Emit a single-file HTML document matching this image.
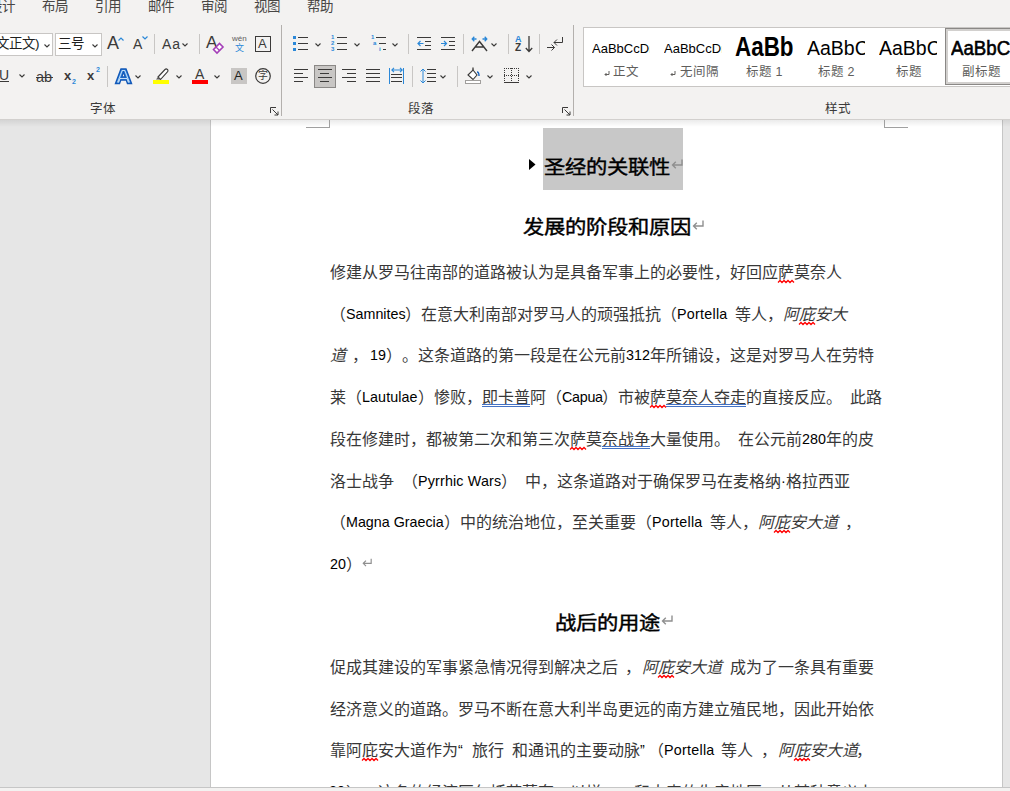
<!DOCTYPE html>
<html lang="zh-CN"><head><meta charset="utf-8"><style>
*{margin:0;padding:0;box-sizing:border-box}
html,body{width:1010px;height:791px;overflow:hidden}
body{position:relative;background:#e6e6e6;font-family:"Liberation Sans",sans-serif;color:#000;text-spacing-trim:space-all}
.a{position:absolute}
.t{position:absolute;white-space:pre;line-height:20px;font-size:16px;color:#383838}
.l{position:absolute;white-space:pre;line-height:20px;font-size:14.3px;color:#000}
.i{position:absolute;white-space:pre;line-height:20px;font-size:16px;font-style:italic;color:#383838}
.h{position:absolute;white-space:pre;line-height:30px;font-size:21.33px;-webkit-text-stroke:0.45px #000;color:#000;transform:scaleY(0.9);transform-origin:0 15px}
.rb{position:absolute;white-space:pre;color:#3b3a39}
svg{position:absolute;overflow:visible}
</style></head><body>

<div class="a" style="left:0;top:0;width:1010px;height:120px;background:#f3f2f1"></div>

<span class="rb" style="left:-11px;top:-2px;font-size:13.5px;line-height:18px;color:#484644">设计</span>
<span class="rb" style="left:42px;top:-2px;font-size:13.5px;line-height:18px;color:#484644">布局</span>
<span class="rb" style="left:95px;top:-2px;font-size:13.5px;line-height:18px;color:#484644">引用</span>
<span class="rb" style="left:148px;top:-2px;font-size:13.5px;line-height:18px;color:#484644">邮件</span>
<span class="rb" style="left:201px;top:-2px;font-size:13.5px;line-height:18px;color:#484644">审阅</span>
<span class="rb" style="left:254px;top:-2px;font-size:13.5px;line-height:18px;color:#484644">视图</span>
<span class="rb" style="left:307px;top:-2px;font-size:13.5px;line-height:18px;color:#484644">帮助</span>
<span class="rb" style="left:90px;top:101px;font-size:12.5px;line-height:16px;color:#3b3a39">字体</span>
<span class="rb" style="left:408px;top:101px;font-size:12.5px;line-height:16px;color:#3b3a39">段落</span>
<span class="rb" style="left:825px;top:101px;font-size:12.5px;line-height:16px;color:#3b3a39">样式</span>
<div class="a" style="left:281px;top:25px;width:1px;height:91px;background:#b3b0ad"></div>
<div class="a" style="left:573px;top:25px;width:1px;height:91px;background:#b3b0ad"></div>
<div class="a" style="left:154px;top:34px;width:1px;height:20px;background:#c8c6c4"></div>
<div class="a" style="left:199px;top:34px;width:1px;height:20px;background:#c8c6c4"></div>
<div class="a" style="left:408px;top:34px;width:1px;height:20px;background:#c8c6c4"></div>
<div class="a" style="left:463px;top:34px;width:1px;height:20px;background:#c8c6c4"></div>
<div class="a" style="left:508px;top:34px;width:1px;height:20px;background:#c8c6c4"></div>
<div class="a" style="left:539px;top:34px;width:1px;height:20px;background:#c8c6c4"></div>
<div class="a" style="left:107px;top:66px;width:1px;height:21px;background:#c8c6c4"></div>
<div class="a" style="left:412px;top:66px;width:1px;height:21px;background:#c8c6c4"></div>
<div class="a" style="left:457px;top:66px;width:1px;height:21px;background:#c8c6c4"></div>
<svg style="left:270px;top:107px" width="9" height="9" viewBox="0 0 9 9"><path d="M0.5 6V0.5H6" fill="none" stroke="#3b3a39" stroke-width="1"/><path d="M2.5 2.5L8 8M8 4.5V8H4.5" fill="none" stroke="#3b3a39" stroke-width="1"/></svg>
<svg style="left:562px;top:107px" width="9" height="9" viewBox="0 0 9 9"><path d="M0.5 6V0.5H6" fill="none" stroke="#3b3a39" stroke-width="1"/><path d="M2.5 2.5L8 8M8 4.5V8H4.5" fill="none" stroke="#3b3a39" stroke-width="1"/></svg>
<div class="a" style="left:-2px;top:33px;width:55px;height:23px;background:#fff;border:1px solid #c8c6c4"></div>
<span class="rb" style="left:-4px;top:36px;font-size:13.5px;line-height:16px;color:#201f1e">文正文)</span>
<svg style="left:44px;top:44px" width="6" height="4" viewBox="0 0 6 4"><path d="M0.5 0.5L3 3L5.5 0.5" fill="none" stroke="#3b3a39" stroke-width="1.1"/></svg>
<div class="a" style="left:55px;top:33px;width:47px;height:23px;background:#fff;border:1px solid #c8c6c4"></div>
<span class="rb" style="left:58px;top:36px;font-size:13.5px;line-height:16px;color:#201f1e">三号</span>
<svg style="left:92px;top:44px" width="6" height="4" viewBox="0 0 6 4"><path d="M0.5 0.5L3 3L5.5 0.5" fill="none" stroke="#3b3a39" stroke-width="1.1"/></svg>
<span class="rb" style="left:107px;top:33px;font-size:18px;line-height:20px;color:#3b3a39">A</span>
<svg style="left:118px;top:37px" width="6" height="4"><path d="M0.5 3.5L3 1L5.5 3.5" fill="none" stroke="#2b88d8" stroke-width="1.2"/></svg>
<span class="rb" style="left:133px;top:36px;font-size:14px;line-height:16px;color:#3b3a39">A</span>
<svg style="left:142px;top:36px" width="6" height="4"><path d="M0.5 0.5L3 3L5.5 0.5" fill="none" stroke="#2b88d8" stroke-width="1.2"/></svg>
<span class="rb" style="left:162px;top:36px;font-size:14px;line-height:16px;color:#3b3a39;letter-spacing:1px">Aa</span>
<svg style="left:182px;top:43px" width="6" height="4" viewBox="0 0 6 4"><path d="M0.5 0.5L3 3L5.5 0.5" fill="none" stroke="#3b3a39" stroke-width="1.1"/></svg>
<span class="rb" style="left:206px;top:33px;font-size:17px;line-height:20px;color:#3b3a39">A</span>
<svg style="left:212px;top:41px" width="13" height="13"><path d="M1.5 8.5L7.5 2.5L11 6L5 12Z" fill="#fff" stroke="#a43fb8" stroke-width="1.6"/><path d="M4 6L7.5 9.5" stroke="#a43fb8" stroke-width="1.2"/></svg>
<span class="rb" style="left:232px;top:34px;font-size:8px;line-height:10px;color:#605e5c">wén</span>
<span class="rb" style="left:235px;top:43px;font-size:9px;line-height:10px;color:#2b88d8">文</span>
<div class="a" style="left:255px;top:36px;width:16px;height:16px;border:1.3px solid #3b3a39"></div>
<span class="rb" style="left:258px;top:37px;font-size:13px;line-height:14px;color:#3b3a39">A</span>
<span class="rb" style="left:-1px;top:68px;font-size:14px;line-height:14px;color:#3b3a39">U</span>
<div class="a" style="left:0;top:81px;width:9px;height:1px;background:#3b3a39"></div>
<svg style="left:19px;top:74px" width="6" height="4" viewBox="0 0 6 4"><path d="M0.5 0.5L3 3L5.5 0.5" fill="none" stroke="#3b3a39" stroke-width="1.1"/></svg>
<span class="rb" style="left:36px;top:70px;font-size:14.5px;line-height:14px;color:#3b3a39">ab</span>
<div class="a" style="left:36px;top:77px;width:17px;height:1px;background:#3b3a39"></div>
<span class="rb" style="left:64px;top:69px;font-size:13px;line-height:14px;font-weight:bold;color:#3b3a39">x</span>
<span class="rb" style="left:72px;top:78px;font-size:7px;line-height:8px;font-weight:bold;color:#2b88d8">2</span>
<span class="rb" style="left:87px;top:69px;font-size:13px;line-height:14px;font-weight:bold;color:#3b3a39">x</span>
<span class="rb" style="left:96px;top:66px;font-size:7px;line-height:8px;font-weight:bold;color:#2b88d8">2</span>
<svg style="left:115px;top:68px" width="17" height="16" viewBox="0 0 17 16"><path d="M6 1H11L16.5 15.5H12.5L11.3 12H5.7L4.5 15.5H0.5Z M6.7 9H10.3L8.5 3.8Z" fill="#3a8ee0" stroke="#1258b8" stroke-width="1.4" fill-rule="evenodd"/><path d="M7.2 2.5H9.8L14.3 14.2H13.3L12 10.5H5L3.7 14.2H2.7Z" fill="none" stroke="#fff" stroke-width="0.7"/></svg>
<svg style="left:135px;top:75px" width="6" height="4" viewBox="0 0 6 4"><path d="M0.5 0.5L3 3L5.5 0.5" fill="none" stroke="#3b3a39" stroke-width="1.1"/></svg>
<svg style="left:153px;top:67px" width="17" height="18" viewBox="0 0 17 18"><path d="M5 10L12 2.5Q13.2 1.3 14.4 2.5Q15.6 3.7 14.4 4.9L7.5 12.5Z" fill="#fff" stroke="#3b3a39" stroke-width="1.1"/><path d="M5 10L3 12.5L5.5 12.6L7.5 12.5Z" fill="#605e5c"/><rect x="0" y="13" width="16" height="4" fill="#ffff00"/></svg>
<svg style="left:176px;top:75px" width="6" height="4" viewBox="0 0 6 4"><path d="M0.5 0.5L3 3L5.5 0.5" fill="none" stroke="#3b3a39" stroke-width="1.1"/></svg>
<span class="rb" style="left:195px;top:66px;font-size:14px;line-height:16px;color:#3b3a39">A</span>
<div class="a" style="left:192px;top:80px;width:16px;height:4px;background:#ff0000"></div>
<svg style="left:214px;top:75px" width="6" height="4" viewBox="0 0 6 4"><path d="M0.5 0.5L3 3L5.5 0.5" fill="none" stroke="#3b3a39" stroke-width="1.1"/></svg>
<div class="a" style="left:231px;top:68px;width:16px;height:16px;background:#c8c6c4"></div>
<span class="rb" style="left:234px;top:69px;font-size:13px;line-height:14px;color:#201f1e">A</span>
<svg style="left:255px;top:68px" width="17" height="17"><circle cx="8" cy="8" r="7.3" fill="none" stroke="#3b3a39" stroke-width="1.2"/></svg>
<span class="rb" style="left:258px;top:69px;font-size:10px;line-height:14px;color:#3b3a39">字</span>
<div class="a" style="left:293px;top:36px;width:3px;height:3px;background:#2b88d8"></div>
<div class="a" style="left:298px;top:37px;width:10px;height:1px;background:#3b3a39"></div>
<div class="a" style="left:293px;top:42px;width:3px;height:3px;background:#2b88d8"></div>
<div class="a" style="left:298px;top:43px;width:10px;height:1px;background:#3b3a39"></div>
<div class="a" style="left:293px;top:48px;width:3px;height:3px;background:#2b88d8"></div>
<div class="a" style="left:298px;top:49px;width:10px;height:1px;background:#3b3a39"></div>
<svg style="left:315px;top:43px" width="6" height="4" viewBox="0 0 6 4"><path d="M0.5 0.5L3 3L5.5 0.5" fill="none" stroke="#3b3a39" stroke-width="1.1"/></svg>
<span class="rb" style="left:331px;top:33px;font-size:6px;line-height:8px;font-weight:bold;color:#2b88d8">1</span>
<div class="a" style="left:337px;top:37px;width:10px;height:1px;background:#3b3a39"></div>
<span class="rb" style="left:331px;top:39px;font-size:6px;line-height:8px;font-weight:bold;color:#2b88d8">2</span>
<div class="a" style="left:337px;top:43px;width:10px;height:1px;background:#3b3a39"></div>
<span class="rb" style="left:331px;top:45px;font-size:6px;line-height:8px;font-weight:bold;color:#2b88d8">3</span>
<div class="a" style="left:337px;top:49px;width:10px;height:1px;background:#3b3a39"></div>
<svg style="left:354px;top:43px" width="6" height="4" viewBox="0 0 6 4"><path d="M0.5 0.5L3 3L5.5 0.5" fill="none" stroke="#3b3a39" stroke-width="1.1"/></svg>
<span class="rb" style="left:371px;top:33px;font-size:6px;line-height:8px;font-weight:bold;color:#2b88d8">1</span>
<span class="rb" style="left:373px;top:39px;font-size:6px;line-height:8px;font-weight:bold;color:#2b88d8">a</span>
<span class="rb" style="left:379px;top:45px;font-size:6px;line-height:8px;font-weight:bold;color:#2b88d8">i</span>
<div class="a" style="left:376px;top:37px;width:10px;height:1px;background:#3b3a39"></div>
<div class="a" style="left:379px;top:43px;width:7px;height:1px;background:#3b3a39"></div>
<div class="a" style="left:383px;top:49px;width:3px;height:1px;background:#3b3a39"></div>
<svg style="left:392px;top:43px" width="6" height="4" viewBox="0 0 6 4"><path d="M0.5 0.5L3 3L5.5 0.5" fill="none" stroke="#3b3a39" stroke-width="1.1"/></svg>
<div class="a" style="left:417px;top:37px;width:14px;height:1px;background:#3b3a39"></div>
<div class="a" style="left:425px;top:41px;width:6px;height:1px;background:#3b3a39"></div>
<div class="a" style="left:425px;top:45px;width:6px;height:1px;background:#3b3a39"></div>
<div class="a" style="left:417px;top:49px;width:14px;height:1px;background:#3b3a39"></div>
<svg style="left:417px;top:40px" width="7" height="7"><path d="M6.5 3.5H1M3.5 1L1 3.5L3.5 6" fill="none" stroke="#2b88d8" stroke-width="1.2"/></svg>
<div class="a" style="left:441px;top:37px;width:14px;height:1px;background:#3b3a39"></div>
<div class="a" style="left:449px;top:41px;width:6px;height:1px;background:#3b3a39"></div>
<div class="a" style="left:449px;top:45px;width:6px;height:1px;background:#3b3a39"></div>
<div class="a" style="left:441px;top:49px;width:14px;height:1px;background:#3b3a39"></div>
<svg style="left:441px;top:40px" width="7" height="7"><path d="M0 3.5H5.5M3 1L5.5 3.5L3 6" fill="none" stroke="#2b88d8" stroke-width="1.2"/></svg>
<svg style="left:471px;top:36px" width="17" height="16" viewBox="0 0 17 16"><path d="M1 15L8.5 5.5L16 15M4.3 11H12.7" fill="none" stroke="#3b3a39" stroke-width="1.4"/><path d="M1.5 3H5.5M3.3 0.8L1.2 3L3.3 5.2M15.5 3H11.5M13.7 0.8L15.8 3L13.7 5.2" fill="none" stroke="#2b88d8" stroke-width="1.3"/></svg>
<svg style="left:491px;top:43px" width="6" height="4" viewBox="0 0 6 4"><path d="M0.5 0.5L3 3L5.5 0.5" fill="none" stroke="#3b3a39" stroke-width="1.1"/></svg>
<span class="rb" style="left:515px;top:34px;font-size:9px;line-height:10px;font-weight:bold;color:#2b88d8">A</span>
<span class="rb" style="left:515px;top:43px;font-size:10px;line-height:10px;font-weight:bold;color:#3b3a39">Z</span>
<svg style="left:525px;top:36px" width="8" height="17"><path d="M4 0V15.5M0.8 12L4 15.5L7.2 12" fill="none" stroke="#3b3a39" stroke-width="1.3"/></svg>
<svg style="left:547px;top:36px" width="17" height="16" viewBox="0 0 17 16"><path d="M15.5 1V6.5H7M10 3.5L7 6.5L10 9.5" fill="none" stroke="#3b3a39" stroke-width="1"/><path d="M0 11.5H7.5M4.5 8.5L7.5 11.5L4.5 14.5" fill="none" stroke="#3b3a39" stroke-width="1"/></svg>
<div class="a" style="left:314px;top:65px;width:22px;height:23px;background:#c8c6c4;border:1px solid #8a8886"></div>
<div class="a" style="left:294px;top:69px;width:14px;height:1.2px;background:#3b3a39"></div>
<div class="a" style="left:294px;top:73px;width:9px;height:1.2px;background:#3b3a39"></div>
<div class="a" style="left:294px;top:77px;width:14px;height:1.2px;background:#3b3a39"></div>
<div class="a" style="left:294px;top:81px;width:9px;height:1.2px;background:#3b3a39"></div>
<div class="a" style="left:318px;top:69px;width:14px;height:1.2px;background:#3b3a39"></div>
<div class="a" style="left:320px;top:73px;width:9px;height:1.2px;background:#3b3a39"></div>
<div class="a" style="left:318px;top:77px;width:14px;height:1.2px;background:#3b3a39"></div>
<div class="a" style="left:320px;top:81px;width:9px;height:1.2px;background:#3b3a39"></div>
<div class="a" style="left:342px;top:69px;width:14px;height:1.2px;background:#3b3a39"></div>
<div class="a" style="left:347px;top:73px;width:9px;height:1.2px;background:#3b3a39"></div>
<div class="a" style="left:342px;top:77px;width:14px;height:1.2px;background:#3b3a39"></div>
<div class="a" style="left:347px;top:81px;width:9px;height:1.2px;background:#3b3a39"></div>
<div class="a" style="left:366px;top:69px;width:14px;height:1.2px;background:#3b3a39"></div>
<div class="a" style="left:366px;top:73px;width:14px;height:1.2px;background:#3b3a39"></div>
<div class="a" style="left:366px;top:77px;width:14px;height:1.2px;background:#3b3a39"></div>
<div class="a" style="left:366px;top:81px;width:14px;height:1.2px;background:#3b3a39"></div>
<div class="a" style="left:389px;top:68px;width:1.2px;height:16px;background:#2b88d8"></div>
<div class="a" style="left:403px;top:68px;width:1.2px;height:16px;background:#2b88d8"></div>
<svg style="left:391px;top:67px" width="12" height="6"><path d="M0.5 3H11.5M3 0.8L0.8 3L3 5.2M9 0.8L11.2 3L9 5.2" fill="none" stroke="#2b88d8" stroke-width="1.1"/></svg>
<div class="a" style="left:391px;top:74px;width:11px;height:1.2px;background:#3b3a39"></div>
<div class="a" style="left:391px;top:77px;width:11px;height:1.2px;background:#3b3a39"></div>
<div class="a" style="left:391px;top:81px;width:11px;height:1.2px;background:#3b3a39"></div>
<svg style="left:419px;top:68px" width="8" height="17"><path d="M4 1V15M1.5 3.5L4 1L6.5 3.5M1.5 12.5L4 15L6.5 12.5" fill="none" stroke="#2b88d8" stroke-width="1"/></svg>
<div class="a" style="left:427px;top:69px;width:9px;height:1.2px;background:#3b3a39"></div>
<div class="a" style="left:427px;top:73px;width:9px;height:1.2px;background:#3b3a39"></div>
<div class="a" style="left:427px;top:77px;width:9px;height:1.2px;background:#3b3a39"></div>
<div class="a" style="left:427px;top:81px;width:9px;height:1.2px;background:#3b3a39"></div>
<svg style="left:440px;top:75px" width="6" height="4" viewBox="0 0 6 4"><path d="M0.5 0.5L3 3L5.5 0.5" fill="none" stroke="#3b3a39" stroke-width="1.1"/></svg>
<svg style="left:465px;top:67px" width="17" height="18" viewBox="0 0 17 18"><path d="M3 8L8 3L12 8L8 12.5Z" fill="#fff" stroke="#3b3a39" stroke-width="1.1"/><path d="M8 3V0.5" stroke="#3b3a39" stroke-width="1.3"/><path d="M12 5Q14 5 14 9" fill="none" stroke="#1664c0" stroke-width="1.4"/><rect x="0.5" y="13.5" width="15" height="3" fill="#fff" stroke="#a19f9d" stroke-width="1"/></svg>
<svg style="left:487px;top:75px" width="6" height="4" viewBox="0 0 6 4"><path d="M0.5 0.5L3 3L5.5 0.5" fill="none" stroke="#3b3a39" stroke-width="1.1"/></svg>
<svg style="left:504px;top:68px" width="16" height="16" viewBox="0 0 16 16" shape-rendering="crispEdges"><g fill="#3b3a39"><rect x="0" y="0" width="1" height="1"/><rect x="0" y="7" width="1" height="1"/><rect x="0" y="0" width="1" height="1"/><rect x="14" y="0" width="1" height="1"/><rect x="7" y="0" width="1" height="1"/><rect x="2" y="0" width="1" height="1"/><rect x="2" y="7" width="1" height="1"/><rect x="0" y="2" width="1" height="1"/><rect x="14" y="2" width="1" height="1"/><rect x="7" y="2" width="1" height="1"/><rect x="4" y="0" width="1" height="1"/><rect x="4" y="7" width="1" height="1"/><rect x="0" y="4" width="1" height="1"/><rect x="14" y="4" width="1" height="1"/><rect x="7" y="4" width="1" height="1"/><rect x="6" y="0" width="1" height="1"/><rect x="6" y="7" width="1" height="1"/><rect x="0" y="6" width="1" height="1"/><rect x="14" y="6" width="1" height="1"/><rect x="7" y="6" width="1" height="1"/><rect x="8" y="0" width="1" height="1"/><rect x="8" y="7" width="1" height="1"/><rect x="0" y="8" width="1" height="1"/><rect x="14" y="8" width="1" height="1"/><rect x="7" y="8" width="1" height="1"/><rect x="10" y="0" width="1" height="1"/><rect x="10" y="7" width="1" height="1"/><rect x="0" y="10" width="1" height="1"/><rect x="14" y="10" width="1" height="1"/><rect x="7" y="10" width="1" height="1"/><rect x="12" y="0" width="1" height="1"/><rect x="12" y="7" width="1" height="1"/><rect x="0" y="12" width="1" height="1"/><rect x="14" y="12" width="1" height="1"/><rect x="7" y="12" width="1" height="1"/><rect x="14" y="0" width="1" height="1"/><rect x="14" y="7" width="1" height="1"/><rect x="0" y="14" width="1" height="1"/><rect x="14" y="14" width="1" height="1"/><rect x="7" y="14" width="1" height="1"/></g><rect x="0" y="14" width="15" height="1" fill="#3b3a39"/></svg>
<svg style="left:526px;top:75px" width="6" height="4" viewBox="0 0 6 4"><path d="M0.5 0.5L3 3L5.5 0.5" fill="none" stroke="#3b3a39" stroke-width="1.1"/></svg>
<div class="a" style="left:583px;top:27px;width:440px;height:60px;background:#fff;border:1px solid #c8c6c4"></div>
<div class="a" style="left:945px;top:28px;width:80px;height:57px;border:1px solid #8a8886;box-shadow:inset 0 0 0 2px #d2d0ce"></div>
<div class="a" style="left:592px;top:40px;width:58px;height:19px;overflow:hidden"><span class="rb" style="left:0;top:0;font-size:13px;line-height:17px;color:#000;font-weight:normal;transform:scaleX(1.0);transform-origin:0 0;-webkit-text-stroke:0px #000">AaBbCcDı</span></div>
<div class="a" style="left:664px;top:40px;width:58px;height:19px;overflow:hidden"><span class="rb" style="left:0;top:0;font-size:13px;line-height:17px;color:#000;font-weight:normal;transform:scaleX(1.0);transform-origin:0 0;-webkit-text-stroke:0px #000">AaBbCcDı</span></div>
<div class="a" style="left:735px;top:31px;width:58px;height:34px;overflow:hidden"><span class="rb" style="left:0;top:0;font-size:28px;line-height:32px;color:#000;font-weight:bold;transform:scaleX(0.8);transform-origin:0 0;-webkit-text-stroke:0px #000">AaBbl</span></div>
<div class="a" style="left:807px;top:36px;width:58px;height:26.5px;overflow:hidden"><span class="rb" style="left:0;top:0;font-size:20.5px;line-height:24.5px;color:#000;font-weight:normal;transform:scaleX(0.95);transform-origin:0 0;-webkit-text-stroke:0px #000">AaBbC</span></div>
<div class="a" style="left:879px;top:36px;width:58px;height:26.5px;overflow:hidden"><span class="rb" style="left:0;top:0;font-size:20.5px;line-height:24.5px;color:#000;font-weight:normal;transform:scaleX(0.95);transform-origin:0 0;-webkit-text-stroke:0px #000">AaBbC</span></div>
<div class="a" style="left:951px;top:36px;width:70px;height:26.5px;overflow:hidden"><span class="rb" style="left:0;top:0;font-size:20.5px;line-height:24.5px;color:#000;font-weight:normal;transform:scaleX(0.91);transform-origin:0 0;-webkit-text-stroke:0.6px #000">AaBbC</span></div>
<span class="rb" style="left:613px;top:64px;font-size:12.5px;line-height:16px;color:#605e5c">正文</span>
<span class="rb" style="left:680px;top:64px;font-size:12.5px;line-height:16px;color:#605e5c">无间隔</span>
<span class="rb" style="left:746px;top:64px;font-size:12.5px;line-height:16px;color:#605e5c">标题 1</span>
<span class="rb" style="left:818px;top:64px;font-size:12.5px;line-height:16px;color:#605e5c">标题 2</span>
<span class="rb" style="left:896px;top:64px;font-size:12.5px;line-height:16px;color:#605e5c">标题</span>
<span class="rb" style="left:962px;top:64px;font-size:12.5px;line-height:16px;color:#605e5c">副标题</span>
<svg style="left:604px;top:71px" width="6" height="6"><path d="M5 0V3.5H1M2.5 2L1 3.5L2.5 5" fill="none" stroke="#605e5c" stroke-width="1"/></svg>
<svg style="left:670px;top:71px" width="6" height="6"><path d="M5 0V3.5H1M2.5 2L1 3.5L2.5 5" fill="none" stroke="#605e5c" stroke-width="1"/></svg>
<div class="a" style="left:211px;top:120px;width:791px;height:667px;background:#fff"></div>
<div class="a" style="left:210px;top:120px;width:1px;height:667px;background:#c6c6c6"></div>
<div class="a" style="left:1002px;top:120px;width:1px;height:667px;background:#c6c6c6"></div>
<div class="a" style="left:0;top:119px;width:1010px;height:1px;background:#d2d0ce"></div>
<div class="a" style="left:0;top:120px;width:1010px;height:7px;background:linear-gradient(#00000014,#00000000)"></div>
<div class="a" style="left:0;top:787px;width:1010px;height:1px;background:#c6c6c6"></div>
<div class="a" style="left:0;top:788px;width:1010px;height:3px;background:#f3f2f1"></div>
<div class="a" style="left:306px;top:127px;width:24px;height:1px;background:#a0a0a0"></div>
<div class="a" style="left:329px;top:120px;width:1px;height:8px;background:#a0a0a0"></div>
<div class="a" style="left:884px;top:127px;width:24px;height:1px;background:#a0a0a0"></div>
<div class="a" style="left:884px;top:120px;width:1px;height:8px;background:#a0a0a0"></div>
<div class="a" style="left:543px;top:128px;width:140px;height:62px;background:#c8c8c8"></div>
<svg style="left:529px;top:159px" width="7" height="12"><path d="M0 0L6.5 5.5L0 11Z" fill="#000"/></svg>
<span class="h" style="left:543.5px;top:152.6px">圣经的关联性</span>
<svg style="left:671px;top:159px" width="12" height="10" viewBox="0 0 12 10"><path d="M11 0.5V6H1.5M4.8 2.7L1.5 6L4.8 9.3" fill="none" stroke="#8f8f8f" stroke-width="1.4"/></svg>
<span class="h" style="left:523px;top:213px">发展的阶段和原因</span>
<svg style="left:692px;top:220px" width="12" height="10" viewBox="0 0 12 10"><path d="M11 0.5V6H1.5M4.8 2.7L1.5 6L4.8 9.3" fill="none" stroke="#8f8f8f" stroke-width="1.4"/></svg>
<span class="h" style="left:555px;top:609px">战后的用途</span>
<svg style="left:661px;top:615px" width="12" height="10" viewBox="0 0 12 10"><path d="M11 0.5V6H1.5M4.8 2.7L1.5 6L4.8 9.3" fill="none" stroke="#8f8f8f" stroke-width="1.4"/></svg>
<span class="t" style="left:330px;top:263.0px">修建从罗马往南部的道路被认为是具备军事上的必要性，好回应萨莫奈人</span>
<svg style="left:778px;top:280.0px" width="16" height="3"><path d="M0 2.5 L2 0.5 L4 2.5 L6 0.5 L8 2.5 L10 0.5 L12 2.5 L14 0.5 L16 2.5" fill="none" stroke="#ff0000" stroke-width="1.3"/></svg>
<span class="t" style="left:330px;top:304.7px">（</span>
<span class="l" style="left:346px;top:303.7px">Samnites</span>
<span class="t" style="left:405px;top:304.7px">）在意大利南部对罗马人的顽强抵抗（</span>
<span class="l" style="left:677px;top:303.7px;letter-spacing:0.26px">Portella</span>
<span class="t" style="left:735px;top:304.7px">等人，</span>
<span class="i" style="left:783px;top:304.7px">阿庇安大</span>
<svg style="left:799px;top:321.7px" width="16" height="3"><path d="M0 2.5 L2 0.5 L4 2.5 L6 0.5 L8 2.5 L10 0.5 L12 2.5 L14 0.5 L16 2.5" fill="none" stroke="#ff0000" stroke-width="1.3"/></svg>
<span class="i" style="left:330px;top:346.4px">道</span>
<span class="t" style="left:352px;top:346.4px">，</span>
<span class="l" style="left:370px;top:345.4px">19</span>
<span class="t" style="left:386px;top:346.4px">）。</span>
<span class="t" style="left:418px;top:346.4px">这条道路的第一段是在公元前</span>
<span class="l" style="left:626px;top:345.4px">312</span>
<span class="t" style="left:650px;top:346.4px">年所铺设，这是对罗马人在劳特</span>
<span class="t" style="left:330px;top:388.1px">莱（</span>
<span class="l" style="left:362px;top:387.1px;letter-spacing:0.1px">Lautulae</span>
<span class="t" style="left:418px;top:388.1px">）惨败，即卡普阿（</span>
<span class="l" style="left:562px;top:387.1px;letter-spacing:-0.28px">Capua</span>
<span class="t" style="left:602px;top:388.1px">）市被萨莫奈人夺走的直接反应。</span>
<span class="t" style="left:850px;top:388.1px">此路</span>
<div class="a" style="left:482px;top:404.1px;width:48px;height:1px;background:#4472c4"></div>
<div class="a" style="left:482px;top:406.1px;width:48px;height:1px;background:#4472c4"></div>
<svg style="left:650px;top:405.1px" width="16" height="3"><path d="M0 2.5 L2 0.5 L4 2.5 L6 0.5 L8 2.5 L10 0.5 L12 2.5 L14 0.5 L16 2.5" fill="none" stroke="#ff0000" stroke-width="1.3"/></svg>
<div class="a" style="left:666px;top:404.1px;width:80px;height:1px;background:#4472c4"></div>
<div class="a" style="left:666px;top:406.1px;width:80px;height:1px;background:#4472c4"></div>
<span class="t" style="left:330px;top:429.8px">段在修建时，都被第二次和第三次萨莫奈战争大量使用。</span>
<span class="t" style="left:738px;top:429.8px">在公元前</span>
<span class="l" style="left:802px;top:428.8px">280</span>
<span class="t" style="left:826px;top:429.8px">年的皮</span>
<svg style="left:570px;top:446.8px" width="16" height="3"><path d="M0 2.5 L2 0.5 L4 2.5 L6 0.5 L8 2.5 L10 0.5 L12 2.5 L14 0.5 L16 2.5" fill="none" stroke="#ff0000" stroke-width="1.3"/></svg>
<div class="a" style="left:602px;top:445.8px;width:48px;height:1px;background:#4472c4"></div>
<div class="a" style="left:602px;top:447.8px;width:48px;height:1px;background:#4472c4"></div>
<span class="t" style="left:330px;top:471.5px">洛士战争</span>
<span class="t" style="left:402px;top:471.5px">（</span>
<span class="l" style="left:418px;top:470.5px;letter-spacing:0.17px">Pyrrhic Wars</span>
<span class="t" style="left:501px;top:471.5px">）</span>
<span class="t" style="left:525px;top:471.5px">中，这条道路对于确保罗马在麦格纳</span>
<span class="l" style="left:781px;top:470.5px">·</span>
<span class="t" style="left:786px;top:471.5px">格拉西亚</span>
<span class="t" style="left:330px;top:513.2px">（</span>
<span class="l" style="left:346px;top:512.2px">Magna Graecia</span>
<span class="t" style="left:444px;top:513.2px">）中的统治地位，至关重要（</span>
<span class="l" style="left:652px;top:512.2px;letter-spacing:0.26px">Portella</span>
<span class="t" style="left:710px;top:513.2px">等人，</span>
<span class="i" style="left:758px;top:513.2px">阿庇安大道</span>
<span class="t" style="left:845px;top:513.2px">，</span>
<svg style="left:774px;top:530.2px" width="16" height="3"><path d="M0 2.5 L2 0.5 L4 2.5 L6 0.5 L8 2.5 L10 0.5 L12 2.5 L14 0.5 L16 2.5" fill="none" stroke="#ff0000" stroke-width="1.3"/></svg>
<span class="l" style="left:330px;top:553.9000000000001px">20</span>
<span class="t" style="left:346px;top:554.9000000000001px">）</span>
<svg style="left:362px;top:557.9000000000001px" width="10" height="9" viewBox="0 0 12 10"><path d="M11 0.5V6H1.5M4.8 2.7L1.5 6L4.8 9.3" fill="none" stroke="#8f8f8f" stroke-width="1.4"/></svg>
<span class="t" style="left:330px;top:658.0px">促成其建设的军事紧急情况得到解决之后</span>
<span class="t" style="left:625px;top:658.0px">，</span>
<span class="i" style="left:642px;top:658.0px">阿庇安大道</span>
<span class="t" style="left:730px;top:658.0px">成为了一条具有重要</span>
<svg style="left:658px;top:675.0px" width="16" height="3"><path d="M0 2.5 L2 0.5 L4 2.5 L6 0.5 L8 2.5 L10 0.5 L12 2.5 L14 0.5 L16 2.5" fill="none" stroke="#ff0000" stroke-width="1.3"/></svg>
<span class="t" style="left:330px;top:699.7px">经济意义的道路。罗马不断在意大利半岛更远的南方建立殖民地，因此开始依</span>
<span class="t" style="left:330px;top:741.4px">靠阿庇安大道作为</span>
<span class="l" style="left:458px;top:740.4px">“</span>
<span class="t" style="left:472px;top:741.4px">旅行</span>
<span class="t" style="left:512px;top:741.4px">和通讯的主要动脉</span>
<span class="l" style="left:640px;top:740.4px">”</span>
<span class="t" style="left:648px;top:741.4px">（</span>
<span class="l" style="left:664px;top:740.4px;letter-spacing:0.26px">Portella</span>
<span class="t" style="left:721px;top:741.4px">等人</span>
<span class="t" style="left:761px;top:741.4px">，</span>
<span class="i" style="left:778px;top:741.4px">阿庇安大道</span>
<span class="t" style="left:856px;top:741.4px">，</span>
<svg style="left:362px;top:758.4px" width="16" height="3"><path d="M0 2.5 L2 0.5 L4 2.5 L6 0.5 L8 2.5 L10 0.5 L12 2.5 L14 0.5 L16 2.5" fill="none" stroke="#ff0000" stroke-width="1.3"/></svg>
<svg style="left:794px;top:758.4px" width="16" height="3"><path d="M0 2.5 L2 0.5 L4 2.5 L6 0.5 L8 2.5 L10 0.5 L12 2.5 L14 0.5 L16 2.5" fill="none" stroke="#ff0000" stroke-width="1.3"/></svg>
<span class="l" style="left:329px;top:781.1px">20</span>
<span class="t" style="left:346px;top:783.1px">），</span>
<span class="t" style="left:378px;top:783.1px">这条的经济区包括萨莫奈</span>
<span class="t" style="left:570px;top:783.1px">以增</span>
<span class="t" style="left:634px;top:783.1px">和大麦的生产地区</span>
<span class="t" style="left:778px;top:783.1px">从某种意义上</span>
<div class="a" style="left:0;top:787px;width:1010px;height:1px;background:#c6c6c6"></div>
<div class="a" style="left:0;top:788px;width:1010px;height:3px;background:#f3f2f1"></div>
</body></html>
